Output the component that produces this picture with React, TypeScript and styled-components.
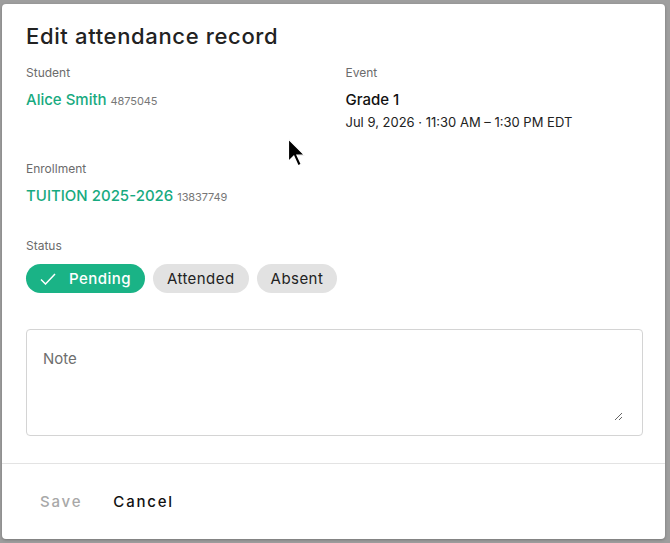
import React from 'react';
import styled, { createGlobalStyle } from 'styled-components';

const GlobalStyle = createGlobalStyle`
    body {
        margin: 0;
        background: #9e9e9e;
        font-family: Inter, 'Open Sans', sans-serif;
        color: #1f1f1f;
    }
`;

const Backdrop = styled.div`
    height: 543px;
    box-sizing: border-box;
    padding: 4px 5px 4px 2px;
    position: relative;
`;

const Dialog = styled.div`
    height: 100%;
    background: #fff;
    border-radius: 4px;
    display: flex;
    flex-direction: column;
    box-shadow: 0 1px 3px rgba(0, 0, 0, 0.25);
`;

const Content = styled.div`
    flex: 1;
    padding: 16px 22px 27px 24px;
    display: flex;
    flex-direction: column;
`;

const Title = styled.h2`
    margin: 0;
    font-size: 22px;
    line-height: 32px;
    font-weight: 500;
    letter-spacing: 0.65px;
    color: #222;
`;

const InfoGrid = styled.div`
    margin-top: 12px;
    display: grid;
    grid-template-columns: 1fr 1fr;
    column-gap: 22px;
    row-gap: 28px;
`;

const Field = styled.div`
    display: flex;
    flex-direction: column;
`;

const Label = styled.div`
    font-size: 12px;
    line-height: 18px;
    color: #6b6b6b;
`;

const Value = styled.div<{ green?: boolean }>`
    margin-top: 6px;
    font-size: 15px;
    line-height: 24px;
    font-weight: 500;
    color: ${props => (props.green ? '#17aa80' : '#111')};
`;

const Sub = styled.span`
    margin-left: 4px;
    font-size: 11px;
    font-weight: 400;
    letter-spacing: -0.1px;
    color: #777;
`;

const DateLine = styled.div`
    font-size: 13px;
    line-height: 20px;
    color: #222;
`;

const StatusSection = styled.div`
    margin-top: 28px;
`;

const Chips = styled.div`
    margin-top: 9px;
    display: flex;
    gap: 8px;
`;

const Chip = styled.button<{ selected?: boolean }>`
    height: 29px;
    border: none;
    border-radius: 15px;
    padding: 0 14px;
    display: flex;
    align-items: center;
    gap: 13px;
    font-family: inherit;
    font-size: 15px;
    font-weight: ${props => (props.selected ? 500 : 400)};
    letter-spacing: 0.45px;
    background: ${props => (props.selected ? '#1ab386' : '#e2e2e2')};
    color: ${props => (props.selected ? '#fff' : '#222')};
    cursor: pointer;
`;

const NoteField = styled.div`
    margin-top: 36px;
    height: 107px;
    box-sizing: border-box;
    border: 1px solid #d4d4d4;
    border-radius: 4px;
    padding: 16px 19px 14px 16px;
    display: flex;
`;

const NoteInput = styled.textarea`
    flex: 1;
    border: none;
    padding: 0;
    margin: 0;
    font-family: inherit;
    font-size: 15px;
    line-height: 26px;
    resize: vertical;
    outline: none;

    &::placeholder {
        color: #6e6e6e;
    }
`;

const Footer = styled.div`
    height: 75px;
    border-top: 1px solid #e3e3e3;
    display: flex;
    align-items: center;
    padding: 0 24px;
    gap: 3px;
`;

const TextButton = styled.button<{ disabled?: boolean }>`
    border: none;
    background: none;
    padding: 8px 14px;
    font-family: inherit;
    font-size: 15px;
    font-weight: 500;
    letter-spacing: 1.8px;
    color: ${props => (props.disabled ? '#a8a8a8' : '#111')};
`;

const Pointer = styled.svg`
    position: absolute;
    left: 287px;
    top: 138px;
`;

const App: React.FC = () => {
    return (
        <Backdrop>
            <GlobalStyle />
            <Dialog>
                <Content>
                    <Title>Edit attendance record</Title>
                    <InfoGrid>
                        <Field>
                            <Label>Student</Label>
                            <Value green>
                                Alice Smith<Sub>4875045</Sub>
                            </Value>
                        </Field>
                        <Field>
                            <Label>Event</Label>
                            <Value>Grade 1</Value>
                            <DateLine>Jul 9, 2026 · 11:30 AM – 1:30 PM EDT</DateLine>
                        </Field>
                        <Field>
                            <Label>Enrollment</Label>
                            <Value green>
                                TUITION 2025-2026<Sub>13837749</Sub>
                            </Value>
                        </Field>
                    </InfoGrid>
                    <StatusSection>
                        <Label>Status</Label>
                        <Chips>
                            <Chip selected>
                                <svg width="16" height="12" viewBox="0 0 16 12">
                                    <path d="M1 6.5 L5.5 11 L15 1" fill="none" stroke="#fff" strokeWidth="1.5" />
                                </svg>
                                Pending
                            </Chip>
                            <Chip>Attended</Chip>
                            <Chip>Absent</Chip>
                        </Chips>
                    </StatusSection>
                    <NoteField>
                        <NoteInput placeholder="Note" />
                    </NoteField>
                </Content>
                <Footer>
                    <TextButton disabled>Save</TextButton>
                    <TextButton>Cancel</TextButton>
                </Footer>
            </Dialog>
            <Pointer width="20" height="30" viewBox="0 0 18 28">
                <path d="M1 1 L1 22 L6 17 L10 26 L13 24.5 L9 16 L16 16 Z" fill="#000" stroke="#fff" strokeWidth="1.2" />
            </Pointer>
        </Backdrop>
    );
};

export default App;
